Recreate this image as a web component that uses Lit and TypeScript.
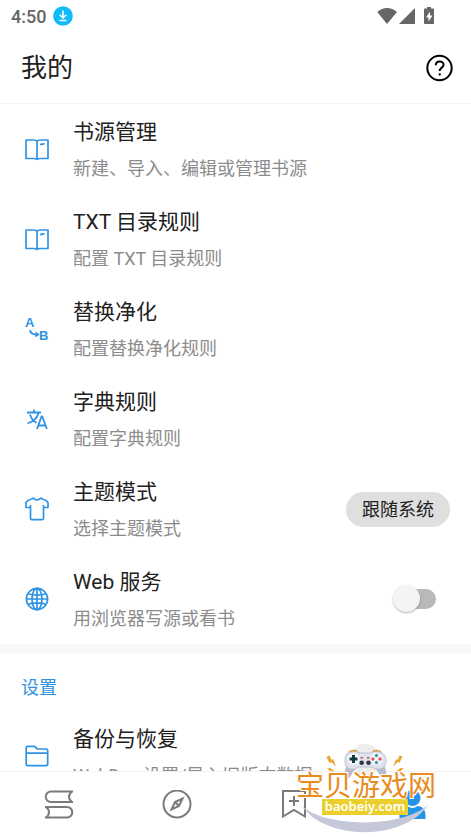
import { LitElement, html, svg, css, nothing } from "lit";
import type { TemplateResult } from "lit";
import { customElement, property, state } from "lit/decorators.js";

type Row = { icon: string; title: string; note: string; control?: "theme" | "switch" };

const icons: Record<string, TemplateResult> = {
  book: svg`<path d="M1 3h8c1.500 0 2.500.6 3 1.300.5-.7 1.500-1.300 3-1.300h8v18.500h-8c-1.500 0-2.500.2-3 .9-.5-.7-1.500-.9-3-.9H1z M12 4.300V22 M15 7.800c1.300-.7 2.800-.9 4.600-.9"/>`,
  replace: svg`<text class="ab" x="0" y="10">A</text><text class="ab" x="14" y="23">B</text>
    <path d="M5 13c.5 3.200 3 4.600 7 4.600"/><path class="fill" d="M10.500 14.600l4.200 3-4.200 2.800z"/>`,
  dict: svg`<path class="thin" d="M2 5.500h14M9 2.500v3M13.500 5.500c-1 5-5 9-11 11M5 7.500c1 4 3.500 6.500 6.500 8.200M12 22l4.500-12.500h.8l4.500 12.500M13.500 18.500h7"/>`,
  shirt: svg`<path d="M6.500 2l2-.9c1.500 2.400 5.500 2.400 7 0l2 .9c2.500.5 4.500 1.800 5.500 3.500V10.500h-4.500v11c0 .8-.4 1.200-1.200 1.200H6.700c-.8 0-1.200-.4-1.200-1.200v-11H1V5.500c1-1.700 3-3 5.500-3.500z M5.500 8V11M18.500 8V11"/>`,
  globe: svg`<circle cx="12" cy="12" r="10.600"/><ellipse cx="12" cy="12" rx="5" ry="10.600"/><path d="M12 1.400v21.200M1.400 12h21.200M3 6.700c5 1.600 13 1.600 18 0M3 17.300c5-1.600 13-1.600 18 0"/>`,
  folder: svg`<path d="M1.200 19.800V4c0-1 .6-1.600 1.500-1.600h6.800L12.500 5H21c1 0 1.700.6 1.700 1.500v13.600c0 1-.6 1.600-1.700 1.600H2.700c-1 0-1.500-.6-1.500-1.900z M1.200 9.200h21.500"/>`,
};

@customElement("setting-row")
export class SettingRow extends LitElement {
  @property({ attribute: false }) row!: Row;
  @state() private on = false;

  static styles = css`
    :host { display: block; }
    .row {
      display: flex; align-items: center; gap: 24px;
      min-height: 90px; box-sizing: border-box; padding: 0 21px 0 25px;
      color: #212121; text-decoration: none;
    }
    .icon {
      flex: none; width: 24px; height: 24px; overflow: visible;
      fill: none; stroke: #2f93e4; stroke-width: 1.700; stroke-linejoin: round;
    }
    .ab { font: bold 13px "Liberation Sans", sans-serif; fill: #2f93e4; stroke: none; }
    .fill { fill: #2f93e4; stroke: none; }
    .thin { stroke-width: 1.800; }
    .text { flex: 1; min-width: 0; display: flex; flex-direction: column; gap: 11px; }
    .title { font-size: 21px; line-height: 28px; }
    .note { font-size: 18px; line-height: 24px; color: #8c8c8c; white-space: nowrap; }
    .pill {
      border: 0; border-radius: 18px; background: #dfdfdf; color: #212121;
      font: inherit; font-size: 18px; line-height: 24px; padding: 6px 16px 5px;
    }
    .switch {
      appearance: none; position: relative; margin: 0 14px 0 0;
      width: 36px; height: 20px; border-radius: 10px; background: #b9b9b9;
    }
    .switch::before {
      content: ""; position: absolute; left: -7px; top: -4px;
      width: 27px; height: 27px; border-radius: 50%;
      background: #f4f4f4; box-shadow: 0 1px 2px rgba(0, 0, 0, .3);
    }
    .switch:checked { background: #9ccbf2; }
    .switch:checked::before { left: 16px; background: #2196f3; }
  `;

  render() {
    const r = this.row;
    const body = html`
      <svg class="icon" viewBox="0 0 24 24" aria-hidden="true">${icons[r.icon]}</svg>
      <span class="text"><span class="title">${r.title}</span><span class="note">${r.note}</span></span>`;
    if (r.control === "switch")
      return html`<label class="row">${body}<input class="switch" type="checkbox" role="switch"
        .checked=${this.on} @change=${() => (this.on = !this.on)}></label>`;
    if (r.control === "theme")
      return html`<div class="row">${body}<button class="pill" aria-haspopup="listbox">跟随系统</button></div>`;
    return html`<a class="row" href="#">${body}</a>`;
  }
}

@customElement("site-mark")
export class SiteMark extends LitElement {
  static styles = css`
    :host { display: block; width: 144px; height: 88px; }
    svg { display: block; width: 100%; height: 100%; overflow: visible; }
    .name {
      font: 400 28px "Noto Sans CJK SC", sans-serif; fill: #e88b20;
      stroke: #fff; stroke-width: 2; paint-order: stroke; text-anchor: middle;
    }
    .domain { font: 600 13px "Noto Sans", sans-serif; fill: #fff; text-anchor: middle; }
  `;
  render() {
    return html`<svg viewBox="0 0 144 88" role="img" aria-label="宝贝游戏网">
      <circle cx="71" cy="16" r="16" fill="#ededed"/>
      <path d="M8 62C32 84 108 84 134 61C110 97 32 97 8 62z" fill="#c5c8d8"/>
      <path d="M53 21c-2 4-3 9-2 13 4 2 6-2 8-6 2-3 3-5 5-5h14c3 0 4 2 6 5 2 4 4 8 8 6 1-4 0-9-2-13z" fill="#b9bdcb"/>
      <path d="M54 9c4-2 9-2 12 0h10c3-2 8-2 12 0 4 2 4 6 4 9 0 5-5 8-9 7-3 0-4-2-6-2H65c-2 0-3 2-6 2-4 1-8-2-8-7 0-3 0-7 3-9z" fill="#dfe2ec" stroke="#b4b8c8" stroke-width=".8"/>
      <path d="M55 8c2-1.500 5-1.700 8-.8M79 7.200c3-.9 6-.7 8 .8" stroke="#dd9a3c" stroke-width="1.500" fill="none"/>
      <circle cx="59.500" cy="15" r="6" fill="#f7f8fa"/><circle cx="82.500" cy="15" r="6" fill="#f7f8fa"/>
      <path d="M59.500 11v8M55.500 15h8" stroke="#173843" stroke-width="3"/>
      <circle cx="82.500" cy="11.500" r="1.700" fill="#3e9fbd"/><circle cx="86" cy="15" r="1.700" fill="#e25252"/>
      <circle cx="82.500" cy="18.500" r="1.700" fill="#3e9fbd"/><circle cx="79" cy="15" r="1.700" fill="#e25252"/>
      <path d="M66.500 13.700h2.500M73 13.700h2.500" stroke="#d34b59" stroke-width="1.500"/>
      <circle cx="67.700" cy="18.700" r="2.300" fill="#33394d"/><circle cx="74.500" cy="18.700" r="2.300" fill="#33394d"/>
      <path d="M32.500 13l3-1.500 2 4.500 1.500-1 3 7.500-5-4.500-1.500 1z M33 24.500l4-.5 1 1.500 3 2-5-.5z" fill="#eda52d"/>
      <path d="M108.500 12.500l-3-1-2 4.500-1.500-.7-3 7.500 5-5 1.500 1z M110 24.500l-4-.5-1 1.500-4 2 5.500-.5z" fill="#eda52d"/>
      <rect x="28" y="55" width="86" height="16" fill="#ebcf2c"/>
      <text class="name" x="72" y="52">宝贝游戏网</text>
      <text class="domain" x="71" y="67">baobeiy.com</text>
    </svg>`;
  }
}

@customElement("app-root")
export class AppRoot extends LitElement {
  private rows: Row[] = [
    { icon: "book", title: "书源管理", note: "新建、导入、编辑或管理书源" },
    { icon: "book", title: "TXT 目录规则", note: "配置 TXT 目录规则" },
    { icon: "replace", title: "替换净化", note: "配置替换净化规则" },
    { icon: "dict", title: "字典规则", note: "配置字典规则" },
    { icon: "shirt", title: "主题模式", note: "选择主题模式", control: "theme" },
    { icon: "globe", title: "Web 服务", note: "用浏览器写源或看书", control: "switch" },
  ];
  private settings: Row[] = [
    { icon: "folder", title: "备份与恢复", note: "WebDav 设置/导入旧版本数据" },
  ];
  private tabs = [
    { label: "书架", art: svg`<path d="M29 1.500H7a5 5 0 0 0 0 10.500h22M28 1.500c-4 3-4 7.500 0 10.500M1 17h22a5 5 0 0 1 0 10.500H1M2 17c4 3 4 7.500 0 10.500"/>` },
    { label: "发现", art: svg`<circle cx="15" cy="14" r="13.500"/><path d="M20.500 8.500L17 16l-7.500 3.500L13 12z M13 12l4 4"/>` },
    { label: "订阅", art: svg`<path d="M4 1h22v25.500l-11-6.500-11 6.500z M15 6v10M10 11h10"/>` },
    { label: "我的", on: true, art: svg`<circle cx="15.500" cy="8" r="8"/><path d="M2.500 29v-4c0-6 5-9 8-9 3 2.500 7 2.500 10 0 4 0 8 3 8 9v4z"/>` },
  ];

  static styles = css`
    :host {
      display: flex; flex-direction: column; position: relative; height: 100vh; overflow: hidden;
      background: #fff; color: #212121;
      font-family: Roboto, "Noto Sans CJK SC", sans-serif;
    }
    .status {
      flex: none; display: flex; align-items: center; height: 32px; padding: 0 36px 0 11px;
      color: #666; font-size: 18px; font-weight: 500;
    }
    .badge { width: 20px; height: 20px; margin-left: 7px; }
    .signals { width: 58px; height: 18px; margin-left: auto; fill: #666; }
    .bar {
      flex: none; display: flex; align-items: center; justify-content: space-between;
      height: 72px; box-sizing: border-box; padding: 0 18px 0 21px; border-bottom: 1px solid #f4f4f4;
    }
    .heading { margin: 0; font-size: 26px; line-height: 36px; font-weight: 400; }
    .help { padding: 0; border: 0; background: none; height: 28px; }
    .help svg { display: block; width: 27px; height: 28px; fill: none; stroke: #000; stroke-width: 2; }
    .list { flex: 1; min-height: 0; overflow: hidden; }
    .group { border-bottom: 10px solid #f8f8f8; }
    .section { margin: 0; padding: 22px 21px 11px; font-size: 18px; line-height: 24px; font-weight: 400; color: #2f93e4; }
    .nav { flex: none; display: flex; height: 66px; box-sizing: border-box; border-top: 1px solid #f2f2f2; }
    .tab { flex: 1; display: flex; justify-content: center; align-items: center; }
    .tab svg { width: 30px; height: 30px; fill: none; stroke: #7a7a7a; stroke-width: 2; }
    .tab.on svg { fill: #2394ec; stroke: none; }
    .mark { position: absolute; right: 33px; bottom: 5px; pointer-events: none; }
  `;

  render() {
    return html`
      <div class="status">
        <span>4:50</span>
        <svg class="badge" viewBox="0 0 20 20" aria-hidden="true">
          <circle cx="10" cy="10" r="9.800" fill="#0fbcf9"/>
          <path d="M10 4.500v7M6.700 8.700l3.300 3.300 3.300-3.300M6.500 14.500h7" fill="none" stroke="#fff" stroke-width="1.500"/>
        </svg>
        <svg class="signals" viewBox="0 0 58 18" aria-hidden="true">
          <path d="M.3 5C6-.2 14-.2 20 5l-10 12z M38 1v16H22z"/>
          <path fill-rule="evenodd" d="M50 0h4v1.500h2c.6 0 1 .4 1 1V16c0 .6-.4 1-1 1h-8c-.6 0-1-.4-1-1V2.500c0-.6.4-1 1-1h2z M53 4.500l-4 6h2.500v4l4-6H53z"/>
        </svg>
      </div>
      <header class="bar">
        <h1 class="heading">我的</h1>
        <button class="help" aria-label="帮助">
          <svg viewBox="0 0 27 28"><circle cx="13.500" cy="14" r="12.200"/>
            <path d="M9.800 11.200c0-5 7.800-5 7.800-.4 0 2.700-3.900 3-3.900 6.200"/><path d="M13.700 19.300v2.200"/></svg>
        </button>
      </header>
      <main class="list">
        <div class="group">${this.rows.map((r) => html`<setting-row .row=${r}></setting-row>`)}</div>
        <h2 class="section">设置</h2>
        ${this.settings.map((r) => html`<setting-row .row=${r}></setting-row>`)}
      </main>
      <nav class="nav">
        ${this.tabs.map((t) => html`<a class="tab ${t.on ? "on" : ""}" href="#" aria-label=${t.label}
          aria-current=${t.on ? "page" : nothing}><svg viewBox="0 0 30 30">${t.art}</svg></a>`)}
      </nav>
      <site-mark class="mark"></site-mark>`;
  }
}
